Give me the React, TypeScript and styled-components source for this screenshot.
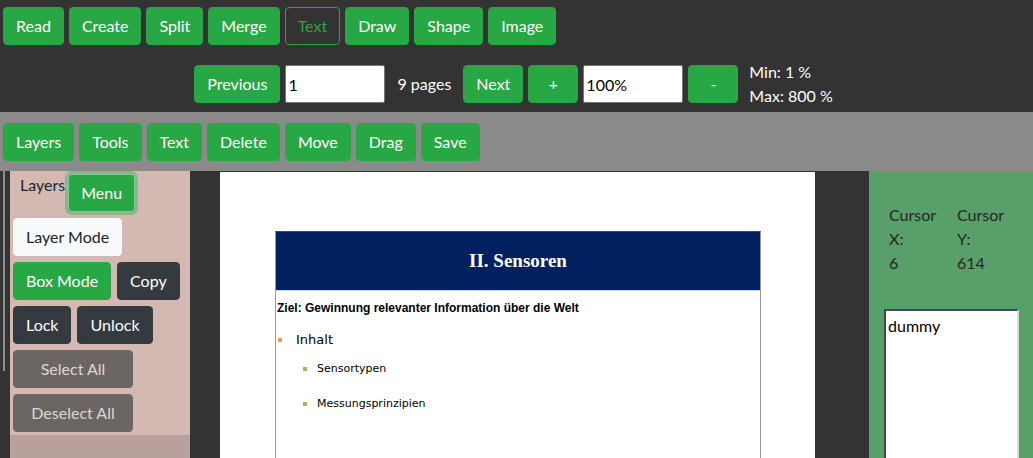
import styled, { createGlobalStyle, css } from "styled-components";

const GlobalStyle = createGlobalStyle`
  html, body {
    margin: 0;
    padding: 0;
    height: 100%;
    overflow: hidden;
  }
  body {
    font-family: Lato, "Noto Sans", sans-serif;
    font-size: 16px;
    line-height: 24px;
    color: #212529;
  }
  * {
    box-sizing: border-box;
  }
`;

type Variant = "success" | "outline" | "light" | "dark" | "muted";

const variants = {
  success: css`
    background: #28a745;
    border-color: #28a745;
    color: #fff;
  `,
  outline: css`
    background: transparent;
    border-color: #28a745;
    color: #28a745;
  `,
  light: css`
    background: #f8f9fa;
    border-color: #f8f9fa;
    color: #212529;
  `,
  dark: css`
    background: #343a40;
    border-color: #343a40;
    color: #fff;
  `,
  muted: css`
    background: #6b6564;
    border-color: #6b6564;
    color: #dcd6d5;
  `,
};

const Button = styled.button<{ $variant?: Variant; $width?: number; $focus?: boolean }>`
  font-family: inherit;
  font-size: 16px;
  line-height: 24px;
  height: 38px;
  padding: 6px 12px;
  border: 1px solid;
  border-radius: 4px;
  cursor: pointer;
  flex: none;
  ${(p) => variants[p.$variant || "success"]}
  ${(p) => p.$width && `width: ${p.$width}px;`}
  ${(p) =>
    p.$focus &&
    css`
      margin-top: 1px;
      border-color: #7fcb8f;
      box-shadow: 0 0 0 3px rgba(72, 180, 97, 0.5);
    `}
`;

const TopBar = styled.header`
  background: #333333;
  height: 112px;
  padding: 7px 3px 0;
  display: flex;
  flex-direction: column;
  gap: 20px;
`;

const ButtonRow = styled.div`
  display: flex;
  gap: 5px;
`;

const PagerRow = styled.div`
  display: flex;
  align-items: center;
  justify-content: center;
  height: 38px;
  gap: 5px;
  padding-right: 6px;
`;

const NumberInput = styled.input`
  width: 100px;
  height: 38px;
  font-family: inherit;
  font-size: 16px;
  padding: 1px 2px;
  border: 1px solid #767676;
  border-radius: 2px;
  background: #fff;
  color: #000;
`;

const PageCount = styled.span`
  color: #fff;
  padding: 0 7px;
`;

const Limits = styled.div`
  color: #fff;
  margin-left: 6px;
  height: 38px;
  display: flex;
  flex-direction: column;
  justify-content: center;
`;

const ToolBar = styled.div`
  background: #8a8a8a;
  height: 59px;
  padding: 11px 3px 0 3px;
  display: flex;
  gap: 5px;
`;

const Main = styled.main`
  display: flex;
  height: calc(100vh - 171px);
  overflow: hidden;
`;

const LeftColumn = styled.div`
  width: 190px;
  flex: none;
  background: #333333;
  display: flex;
  padding-left: 3px;
  gap: 5px;
`;

const ScrollTrack = styled.div`
  width: 2px;
  height: 200px;
  background: #8f8f8f;
`;

const Sidebar = styled.aside`
  flex: 1;
  background: #b8a19c;
`;

const SidebarBody = styled.div`
  background: #d4b9b2;
  padding: 2px 0 3px 3px;
  display: flex;
  flex-direction: column;
  gap: 6px;
`;

const SidebarHead = styled.div`
  display: flex;
  align-items: flex-start;
  gap: 3px;
`;

const SidebarLabel = styled.span`
  margin-left: 7px;
  color: #212529;
`;

const SidebarRow = styled.div`
  display: flex;
  gap: 6px;
`;

const Canvas = styled.section`
  flex: 1;
  background: #333333;
  padding: 1px 0 0 30px;
`;

const Sheet = styled.div`
  width: 595px;
  height: 842px;
  background: #fff;
  padding-top: 59px;
  padding-left: 55px;
`;

const Slide = styled.div`
  width: 486px;
  height: 600px;
  border: 1px solid #9a9a9a;
  border-top-color: #3c4a66;
`;

const SlideHeader = styled.div`
  background: #002060;
  height: 59px;
  display: flex;
  align-items: center;
  justify-content: center;
  border-bottom: 1px solid #c9d6e8;
  color: #fff;
  font-family: "Liberation Serif", "DejaVu Serif", serif;
  font-weight: bold;
  font-size: 19px;
`;

const SlideGoal = styled.p`
  margin: 9px 0 0 1px;
  font-family: "Liberation Sans", Arial, sans-serif;
  font-weight: bold;
  font-size: 12px;
  line-height: 16px;
  color: #000;
`;

const BulletList = styled.ul<{ $indent: number; $gap: number; $size: number; $top: number }>`
  list-style: none;
  margin: ${(p) => p.$top}px 0 0;
  padding: 0 0 0 ${(p) => p.$indent}px;
  display: flex;
  flex-direction: column;
  gap: ${(p) => p.$gap}px;
  font-family: "DejaVu Sans", Verdana, sans-serif;
  font-size: ${(p) => p.$size}px;
  line-height: 16px;
  color: #000;
`;

const BulletItem = styled.li<{ $color: string; $space: number }>`
  display: flex;
  align-items: center;
  gap: ${(p) => p.$space}px;
  &::before {
    content: "";
    width: 4px;
    height: 4px;
    background: ${(p) => p.$color};
  }
`;

const RightPanel = styled.aside`
  width: 164px;
  flex: none;
  background: #589f69;
  padding: 32px 0 0 15px;
`;

const CursorGrid = styled.div`
  display: grid;
  grid-template-columns: 68px auto;
  padding-left: 5px;
  color: #1f2a22;
  margin-bottom: 34px;
`;

const CursorCell = styled.div`
  display: flex;
  flex-direction: column;
`;

const Notes = styled.textarea`
  width: 135px;
  height: 200px;
  border: 2px inset #9a9a9a;
  border-right-color: #dcdcdc;
  font-family: inherit;
  font-size: 16px;
  line-height: 22px;
  padding: 4px 2px;
  resize: none;
  color: #000;
  background: #fff;
`;

const modes = ["Read", "Create", "Split", "Merge", "Text", "Draw", "Shape", "Image"];
const tools = ["Layers", "Tools", "Text", "Delete", "Move", "Drag", "Save"];

export default function App() {
  return (
    <>
      <GlobalStyle />
      <TopBar>
        <ButtonRow>
          {modes.map((m) => (
            <Button key={m} $variant={m === "Text" ? "outline" : "success"}>
              {m}
            </Button>
          ))}
        </ButtonRow>
        <PagerRow>
          <Button>Previous</Button>
          <NumberInput defaultValue="1" />
          <PageCount>9 pages</PageCount>
          <Button>Next</Button>
          <Button $width={50}>+</Button>
          <NumberInput defaultValue="100%" />
          <Button $width={50}>-</Button>
          <Limits>
            <span>Min: 1 %</span>
            <span>Max: 800 %</span>
          </Limits>
        </PagerRow>
      </TopBar>
      <ToolBar>
        {tools.map((t) => (
          <Button key={t}>{t}</Button>
        ))}
      </ToolBar>
      <Main>
        <LeftColumn>
          <ScrollTrack />
          <Sidebar>
            <SidebarBody>
              <SidebarHead>
                <SidebarLabel>Layers</SidebarLabel>
                <Button $focus>Menu</Button>
              </SidebarHead>
              <SidebarRow>
                <Button $variant="light">Layer Mode</Button>
              </SidebarRow>
              <SidebarRow>
                <Button>Box Mode</Button>
                <Button $variant="dark">Copy</Button>
              </SidebarRow>
              <SidebarRow>
                <Button $variant="dark">Lock</Button>
                <Button $variant="dark">Unlock</Button>
              </SidebarRow>
              <SidebarRow>
                <Button $variant="muted" $width={120}>
                  Select All
                </Button>
              </SidebarRow>
              <SidebarRow>
                <Button $variant="muted" $width={120}>
                  Deselect All
                </Button>
              </SidebarRow>
            </SidebarBody>
          </Sidebar>
        </LeftColumn>
        <Canvas>
          <Sheet>
            <Slide>
              <SlideHeader>II. Sensoren</SlideHeader>
              <SlideGoal>Ziel: Gewinnung relevanter Information über die Welt</SlideGoal>
              <BulletList $indent={2} $gap={0} $size={13} $top={16}>
                <BulletItem $color="#f79646" $space={14}>
                  Inhalt
                </BulletItem>
              </BulletList>
              <BulletList $indent={27} $gap={19} $size={11} $top={13}>
                <BulletItem $color="#9bbb59" $space={10}>
                  Sensortypen
                </BulletItem>
                <BulletItem $color="#9bbb59" $space={10}>
                  Messungsprinzipien
                </BulletItem>
              </BulletList>
            </Slide>
          </Sheet>
        </Canvas>
        <RightPanel>
          <CursorGrid>
            <CursorCell>
              <span>Cursor</span>
              <span>X:</span>
              <span>6</span>
            </CursorCell>
            <CursorCell>
              <span>Cursor</span>
              <span>Y:</span>
              <span>614</span>
            </CursorCell>
          </CursorGrid>
          <Notes defaultValue="dummy" />
        </RightPanel>
      </Main>
    </>
  );
}
